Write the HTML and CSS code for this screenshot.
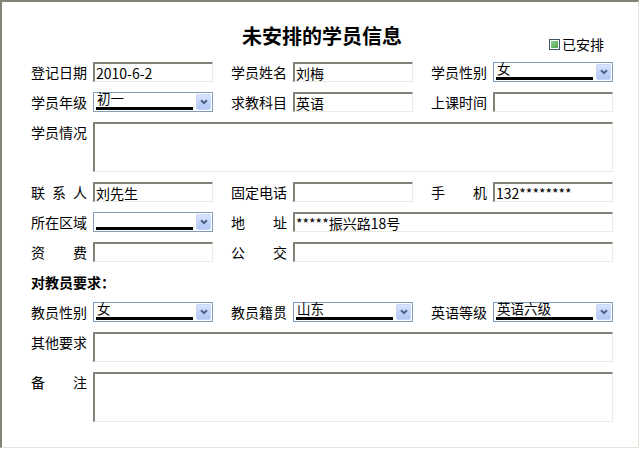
FILE: index.html
```html
<!DOCTYPE html>
<html lang="zh-CN">
<head>
<meta charset="utf-8">
<title>未安排的学员信息</title>
<link rel="stylesheet" href="styles.css">
</head>
<body>
<div class="frame">
  <div class="header">
    <div></div>
    <h1 class="title">未安排的学员信息</h1>
    <label class="chk"><span class="box"><span class="fill"></span></span>已安排</label>
  </div>
  <div class="form">
    <div class="row">
      <div class="field"><span class="lbl">登记日期</span><input class="txt" type="text" value="2010-6-2"></div>
      <div class="field"><span class="lbl">学员姓名</span><input class="txt" type="text" value="刘梅"></div>
      <div class="field"><span class="lbl">学员性别</span><div class="select"><span class="val">女</span><span class="btn"><svg width="8" height="6" viewBox="0 0 8 6"><path d="M1 1.2 L4 4.2 L7 1.2" fill="none" stroke="#4d6185" stroke-width="2"/></svg></span></div></div>
    </div>
    <div class="row">
      <div class="field"><span class="lbl">学员年级</span><div class="select"><span class="val">初一</span><span class="btn"><svg width="8" height="6" viewBox="0 0 8 6"><path d="M1 1.2 L4 4.2 L7 1.2" fill="none" stroke="#4d6185" stroke-width="2"/></svg></span></div></div>
      <div class="field"><span class="lbl">求教科目</span><input class="txt" type="text" value="英语"></div>
      <div class="field"><span class="lbl">上课时间</span><input class="txt" type="text" value=""></div>
    </div>
    <div class="row">
      <div class="field"><span class="lbl">学员情况</span><textarea class="area tall"></textarea></div>
    </div>
    <div class="row">
      <div class="field"><span class="lbl">联系人</span><input class="txt" type="text" value="刘先生"></div>
      <div class="field"><span class="lbl">固定电话</span><input class="txt" type="text" value=""></div>
      <div class="field"><span class="lbl">手机</span><input class="txt" type="text" value="132********"></div>
    </div>
    <div class="row">
      <div class="field"><span class="lbl">所在区域</span><div class="select"><span class="val"></span><span class="btn"><svg width="8" height="6" viewBox="0 0 8 6"><path d="M1 1.2 L4 4.2 L7 1.2" fill="none" stroke="#4d6185" stroke-width="2"/></svg></span></div></div>
      <div class="field"><span class="lbl">地址</span><input class="txt wide2" type="text" value="*****振兴路18号"></div>
    </div>
    <div class="row">
      <div class="field"><span class="lbl">资费</span><input class="txt" type="text" value=""></div>
      <div class="field"><span class="lbl">公交</span><input class="txt wide2" type="text" value=""></div>
    </div>
    <div class="row">
      <div class="section">对教员要求：</div>
    </div>
    <div class="row">
      <div class="field"><span class="lbl">教员性别</span><div class="select"><span class="val">女</span><span class="btn"><svg width="8" height="6" viewBox="0 0 8 6"><path d="M1 1.2 L4 4.2 L7 1.2" fill="none" stroke="#4d6185" stroke-width="2"/></svg></span></div></div>
      <div class="field"><span class="lbl">教员籍贯</span><div class="select"><span class="val">山东</span><span class="btn"><svg width="8" height="6" viewBox="0 0 8 6"><path d="M1 1.2 L4 4.2 L7 1.2" fill="none" stroke="#4d6185" stroke-width="2"/></svg></span></div></div>
      <div class="field"><span class="lbl">英语等级</span><div class="select"><span class="val">英语六级</span><span class="btn"><svg width="8" height="6" viewBox="0 0 8 6"><path d="M1 1.2 L4 4.2 L7 1.2" fill="none" stroke="#4d6185" stroke-width="2"/></svg></span></div></div>
    </div>
    <div class="row">
      <div class="field"><span class="lbl">其他要求</span><textarea class="area short"></textarea></div>
    </div>
    <div class="row">
      <div class="field"><span class="lbl">备注</span><textarea class="area tall"></textarea></div>
    </div>
  </div>
</div>
</body>
</html>
```

FILE: styles.css
```css
* { box-sizing: border-box; }
html, body { margin: 0; padding: 0; background: #fff; }
body {
  font-family: "Noto Sans CJK SC", "Noto Sans", sans-serif;
  font-size: 14px;
  color: #000;
}
.frame {
  width: 639px;
  height: 448px;
  border-top: 2px solid #828278;
  border-left: 2px solid #828278;
  border-right: 1px solid #e6e4da;
  border-bottom: 1px solid #e6e4da;
  padding-left: 29px;
}
.header {
  width: 582px;
  height: 52px;
  display: grid;
  grid-template-columns: 1fr auto 1fr;
}
.title {
  margin: 22px 0 0 0;
  font-size: 20px;
  line-height: 24px;
  font-weight: bold;
  align-self: start;
}
.chk {
  justify-self: end;
  align-self: end;
  margin-right: 9px;
  display: flex;
  align-items: center;
  gap: 2px;
  line-height: 20px;
}
.box {
  width: 11px;
  height: 11px;
  border: 1px solid #3b5868;
  padding: 1px;
  background: #fff;
  display: block;
}
.fill {
  display: block;
  width: 100%;
  height: 100%;
  background: linear-gradient(135deg, #8fd08f, #4fa64f);
}
.form {
  margin-top: 8px;
  display: flex;
  flex-direction: column;
  gap: 10px;
}
.row {
  display: flex;
  gap: 18px;
  align-items: flex-start;
}
.field {
  display: flex;
  align-items: flex-start;
}
.lbl {
  width: 56px;
  margin-right: 6px;
  line-height: 20px;
  text-align: justify;
  text-align-last: justify;
  white-space: nowrap;
}
.txt {
  width: 120px;
  height: 20px;
  margin: 0;
  padding: 0 1px;
  font: inherit;
  font-size: 14px;
  line-height: 16px;
  color: #000;
  background: #fff;
  border-top: 2px solid #828278;
  border-left: 2px solid #828278;
  border-right: 1px solid #ecebe2;
  border-bottom: 1px solid #ecebe2;
  outline: none;
}
.txt.wide2 { width: 320px; }
.area {
  width: 520px;
  margin: 0;
  padding: 0;
  resize: none;
  font: inherit;
  background: #fff;
  border-top: 2px solid #828278;
  border-left: 2px solid #828278;
  border-right: 1px solid #ecebe2;
  border-bottom: 1px solid #ecebe2;
  outline: none;
  display: block;
}
.area.tall { height: 50px; }
.area.short { height: 30px; }
.select {
  width: 120px;
  height: 20px;
  border: 1px solid #7f9db9;
  background: #fff;
  display: flex;
  align-items: flex-start;
}
.val {
  width: 97px;
  height: 17px;
  margin-left: 2px;
  margin-right: 3px;
  border-bottom: 3px solid #000;
  font-size: 13.5px;
  line-height: 11px;
  padding-left: 1px;
  padding-top: 0;
}
.btn {
  width: 15px;
  height: 16px;
  margin-top: 1px;
  border: 1px solid #c6d5f8;
  border-radius: 2px;
  background: linear-gradient(180deg, #dbe5fd 0%, #c3d4fa 50%, #b2c6f4 100%);
  display: flex;
  align-items: center;
  justify-content: center;
}
.btn svg { display: block; }
.section {
  font-weight: bold;
  line-height: 20px;
}
```
